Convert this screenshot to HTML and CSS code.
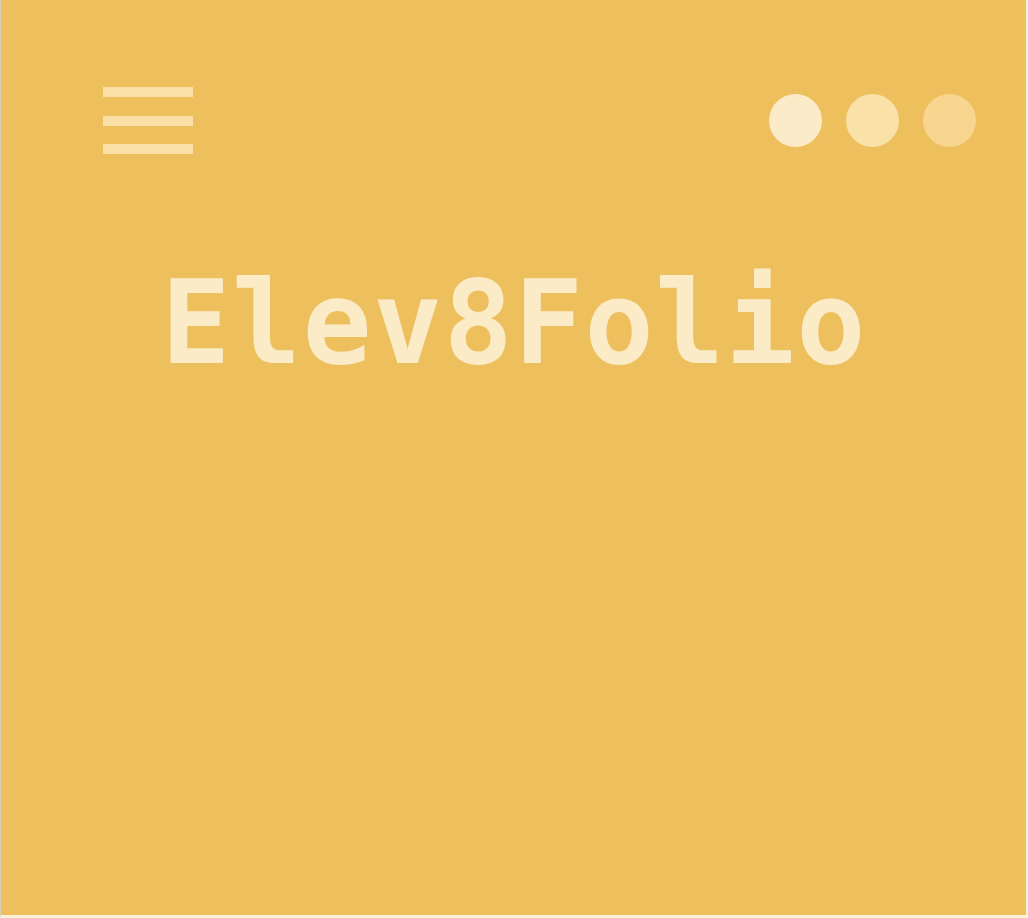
FILE: index.html
```html
<!DOCTYPE html>
<html lang="en">
<head>
<meta charset="utf-8">
<title>Elev8Folio</title>
<link rel="stylesheet" href="styles.css">
</head>
<body>
<div class="frame">
  <header class="topbar">
    <div class="menu" aria-label="Menu">
      <span class="bar"></span>
      <span class="bar"></span>
      <span class="bar"></span>
    </div>
    <div class="dots">
      <span class="dot dot-1"></span>
      <span class="dot dot-2"></span>
      <span class="dot dot-3"></span>
    </div>
  </header>
  <h1 class="title">Elev8Folio</h1>
</div>
</body>
</html>
```

FILE: styles.css
```css
html, body {
  margin: 0;
  padding: 0;
  background: #edbf5d;
}

.frame {
  box-sizing: border-box;
  width: 1028px;
  height: 918px;
  background: #edbf5d;
  border-left: 1px solid #d9cfb8;
  border-right: 2px solid #fbf3e0;
  border-bottom: 3px solid #fbf1d8;
  overflow: hidden;
}

.topbar {
  display: flex;
  justify-content: space-between;
  align-items: center;
  padding: 87px 50px 0 102px;
}

.menu {
  display: flex;
  flex-direction: column;
  gap: 18.5px;
  width: 90px;
}

.bar {
  display: block;
  height: 10px;
  background: #f8e0a6;
}

.dots {
  display: flex;
  gap: 24px;
}

.dot {
  display: block;
  width: 53px;
  height: 53px;
  border-radius: 50%;
}

.dot-1 { background: #fbebc8; }
.dot-2 { background: #f9e1a8; }
.dot-3 { background: #f8d690; }

.title {
  margin: 111px 0 0;
  padding-left: 1px;
  text-align: center;
  font-family: "DejaVu Sans Mono", "Liberation Mono", monospace;
  font-weight: bold;
  font-size: 115px;
  line-height: 116px;
  letter-spacing: 1.3px;
  color: #fbebc7;
}
```
